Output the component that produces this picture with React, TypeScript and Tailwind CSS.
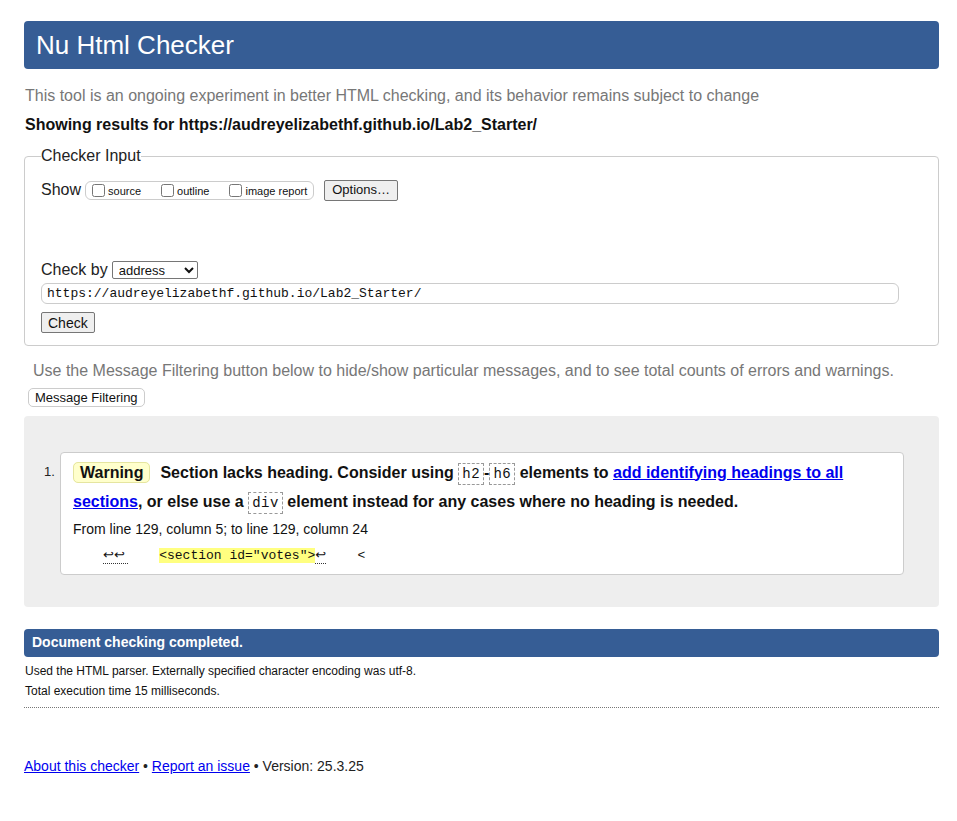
import React from 'react';

const sans = { fontFamily: '"Liberation Sans", Arial, sans-serif' };

function Code({ children }: { children: React.ReactNode }) {
  return (
    <code className="inline-block border border-dashed border-[#999] px-[3px] font-['Liberation_Mono','DejaVu_Sans_Mono',monospace] text-[14px] font-normal leading-[20px] tracking-[0.5px]">
      {children}
    </code>
  );
}

export default function App() {
  return (
    <div style={sans} className="min-h-[821px] bg-white px-[24px] pt-[21px] text-[16px] text-[#111]">
      <div className="w-[915px]">
        <h1 className="flex h-[48px] items-center rounded-[4px] bg-[#365d95] pl-[12px] text-[26px] font-normal text-white">
          Nu Html Checker
        </h1>

        <p className="mt-[18px] pl-[1px] text-[16px] leading-[18px] text-[#777]">
          This tool is an ongoing experiment in better HTML checking, and its behavior remains subject to change
        </p>
        <p className="mt-[11px] pl-[1px] text-[16px] font-bold leading-[18px] text-[#111]">
          Showing results for https://audreyelizabethf.github.io/Lab2_Starter/
        </p>

        <fieldset className="mt-[13px] h-[199px] rounded-[4px] border border-[#ccc] px-[16px] pb-[12px]">
          <legend className="text-[16px] leading-[18px] text-[#222]">Checker Input</legend>

          <div className="mt-[13px] flex items-center">
            <span className="text-[16px] text-[#222]">Show</span>
            <span className="ml-[4px] flex h-[19px] items-center rounded-[6px] border border-[#ccc] pl-[6px] pr-[6px] text-[11px]">
              <label className="flex items-center">
                <input type="checkbox" className="m-0 h-[13px] w-[13px]" />
                <span className="ml-[3px] mt-[2px]">source</span>
              </label>
              <label className="ml-[20px] flex items-center">
                <input type="checkbox" className="m-0 h-[13px] w-[13px]" />
                <span className="ml-[3px] mt-[2px]">outline</span>
              </label>
              <label className="ml-[20px] flex items-center">
                <input type="checkbox" className="m-0 h-[13px] w-[13px]" />
                <span className="ml-[3px] mt-[2px]">image report</span>
              </label>
            </span>
            <button className="ml-[10px] h-[21px] rounded-[2px] border border-[#767676] bg-[#efefef] px-[7px] text-[13px] leading-[18px]">
              Options…
            </button>
          </div>

          <div className="mt-[56px] flex items-center">
            <span className="text-[16px] text-[#222]">Check by</span>
            <select className="ml-[4px] h-[18px] w-[86px] rounded-[2px] border border-[#767676] bg-white pl-[2px] text-[13px] leading-[16px]" defaultValue="address">
              <option value="address">address</option>
            </select>
          </div>
          <input
            type="text"
            readOnly
            value="https://audreyelizabethf.github.io/Lab2_Starter/"
            className="mt-[1px] block h-[21px] w-[858px] rounded-[6px] border border-[#ccc] px-[5px] font-['Liberation_Mono','DejaVu_Sans_Mono',monospace] text-[13px] text-[#111] outline-none"
          />
          <button className="mt-[8px] h-[21px] rounded-[2px] border border-[#767676] bg-[#efefef] px-[6px] text-[14px] leading-[18px]">
            Check
          </button>
        </fieldset>

        <p className="mt-[16px] pl-[9px] text-[16px] leading-[18px] text-[#777]">
          Use the Message Filtering button below to hide/show particular messages, and to see total counts of errors and warnings.
        </p>
        <button className="ml-[4px] mt-[8px] h-[19px] rounded-[5px] border border-[#ccc] bg-white px-[6px] text-[13px] leading-[16px] text-[#111]">
          Message Filtering
        </button>

        <div className="mt-[7px] h-[191px] rounded-[4px] bg-[#eee] pl-[20px] pt-[36px]">
          <ol className="flex">
            <span className="mt-[10px] w-[16px] text-[13px] text-[#222]">1.</span>
            <li className="w-[844px] rounded-[4px] border border-[#ccc] bg-white pl-[12px] pr-[20px] pb-[10px] pt-[5px]">
              <p className="text-[16px] font-bold leading-[29px] text-[#111]">
                <strong className="mr-[10px] rounded-[5px] border border-[#e5e5a0] bg-[#ffffcc] px-[6px] py-[1px]">Warning</strong>
                Section lacks heading. Consider using <Code>h2</Code>
                -
                <Code>h6</Code> elements to{' '}
                <a href="#" className="text-[#0000ee] underline">add identifying headings to all sections</a>
                , or else use a <Code>div</Code> element instead for any cases where no heading is needed.
              </p>
              <p className="mt-[4px] text-[14px] leading-[18px] text-[#111]">
                From line 129, column 5; to line 129, column 24
              </p>
              <p className="mt-[9px] whitespace-pre pl-[30px] font-['Liberation_Mono','DejaVu_Sans_Mono',monospace] text-[13px] leading-[16px] text-[#111]">
                <span className="inline-block w-[25px] border-b border-dotted border-[#333] font-['DejaVu_Sans',sans-serif] text-[13px] leading-[16px]">↩↩</span>
                {'    '}
                <span className="bg-[#ffff80]">&lt;section id="votes"&gt;</span>
                <span className="inline-block w-[11px] border-b border-dotted border-[#333] font-['DejaVu_Sans',sans-serif] text-[13px] leading-[16px]">↩</span>
                {'    <'}
              </p>
            </li>
          </ol>
        </div>

        <h2 className="mt-[22px] flex h-[28px] items-center rounded-[4px] bg-[#365d95] pl-[8px] text-[14px] font-bold text-white">
          Document checking completed.
        </h2>
        <p className="mt-[7px] pl-[1px] text-[12px] leading-[14px] text-[#111]">
          Used the HTML parser. Externally specified character encoding was utf-8.
        </p>
        <p className="mt-[6px] pl-[1px] text-[12px] leading-[14px] text-[#111]">Total execution time 15 milliseconds.</p>
        <div className="mt-[9px] border-b border-dotted border-[#777]" />

        <p className="mt-[50px] text-[14px] leading-[16px] text-[#222]">
          <a href="#" className="text-[#0000ee] underline">About this checker</a>
          {' • '}
          <a href="#" className="text-[#0000ee] underline">Report an issue</a>
          {' • Version: 25.3.25'}
        </p>
      </div>
    </div>
  );
}
